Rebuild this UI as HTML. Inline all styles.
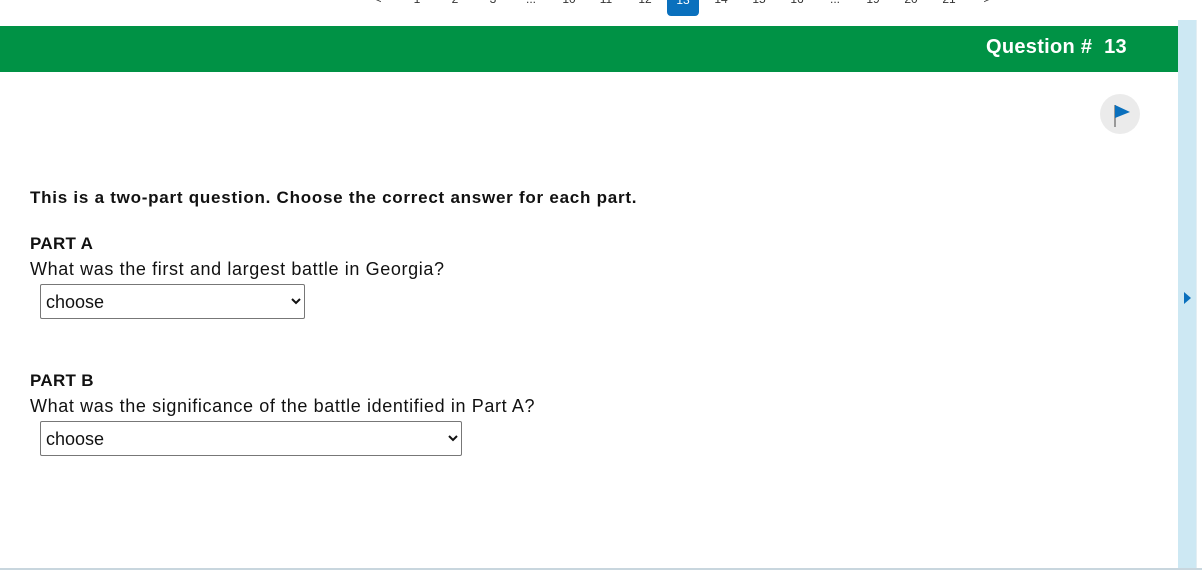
<!DOCTYPE html>
<html><head><meta charset="utf-8"><style>
body{margin:0;width:1202px;height:570px;overflow:hidden;background:#fff;font-family:"Liberation Sans",sans-serif;position:relative;color:#111}
.pg{position:absolute;top:-9px;font-size:12px;color:#333;width:30px;text-align:center;line-height:16px}
.cur{position:absolute;left:667px;top:-6px;width:32px;height:22px;background:#0a70bd;border-radius:4px;color:#fff;font-size:12px;text-align:center;line-height:12px}
.bar{position:absolute;left:0;top:26px;width:1178px;height:46px;background:#009245}
.bar span{position:absolute;left:986px;top:10px;color:#fff;font-weight:bold;font-size:20px;letter-spacing:0.3px}
.side{position:absolute;left:1178px;top:20px;width:18px;height:548px;background:#cde8f3}
.flag{position:absolute;left:1100px;top:94px;width:40px;height:40px;border-radius:50%;background:#ebebeb}
.t{position:absolute;left:30px;font-size:18px;letter-spacing:0.62px;white-space:nowrap}
.b{font-weight:bold}
select{position:absolute;left:40px;height:35px;border:1px solid #777;border-radius:2px;background:#fff;font-family:"Liberation Sans",sans-serif;font-size:18px;padding:0 1px;color:#111}
</style></head><body>
<div class="pg" style="left:363px">&lt;</div>
<div class="pg" style="left:402px">1</div>
<div class="pg" style="left:440px">2</div>
<div class="pg" style="left:478px">3</div>
<div class="pg" style="left:516px">...</div>
<div class="pg" style="left:554px">10</div>
<div class="pg" style="left:591px">11</div>
<div class="pg" style="left:630px">12</div>
<div class="cur">13</div>
<div class="pg" style="left:706px">14</div>
<div class="pg" style="left:744px">15</div>
<div class="pg" style="left:782px">16</div>
<div class="pg" style="left:820px">...</div>
<div class="pg" style="left:858px">19</div>
<div class="pg" style="left:896px">20</div>
<div class="pg" style="left:934px">21</div>
<div class="pg" style="left:972px">&gt;</div>
<div class="bar"><span>Question #&nbsp; 13</span></div>
<div class="side"><div style="position:absolute;left:6px;top:272px;width:0;height:0;border-top:6px solid transparent;border-bottom:6px solid transparent;border-left:7px solid #0a70bd"></div></div>
<div style="position:absolute;left:1196px;top:20px;width:6px;height:548px;background:#fff;border-left:1px solid #e3eef3"></div>
<div style="position:absolute;left:0;top:568px;width:1202px;height:2px;background:#c8d6de"></div>
<div class="flag"><svg width="40" height="40"><line x1="15" y1="11" x2="15" y2="33" stroke="#999" stroke-width="2"/><path d="M15 11 L30 18 L15 24Z" fill="#0a70bd"/></svg></div>
<div class="t b" style="top:188px;font-size:17px;letter-spacing:0.75px">This is a two-part question. Choose the correct answer for each part.</div>
<div class="t b" style="top:234px;font-size:17px;letter-spacing:0.3px">PART A</div>
<div class="t" style="top:259px">What was the first and largest battle in Georgia?</div>
<select style="top:284px;width:265px"><option>choose</option></select>
<div class="t b" style="top:371px;font-size:17px;letter-spacing:0.3px">PART B</div>
<div class="t" style="top:396px">What was the significance of the battle identified in Part A?</div>
<select style="top:421px;width:422px"><option>choose</option></select>
</body></html>
